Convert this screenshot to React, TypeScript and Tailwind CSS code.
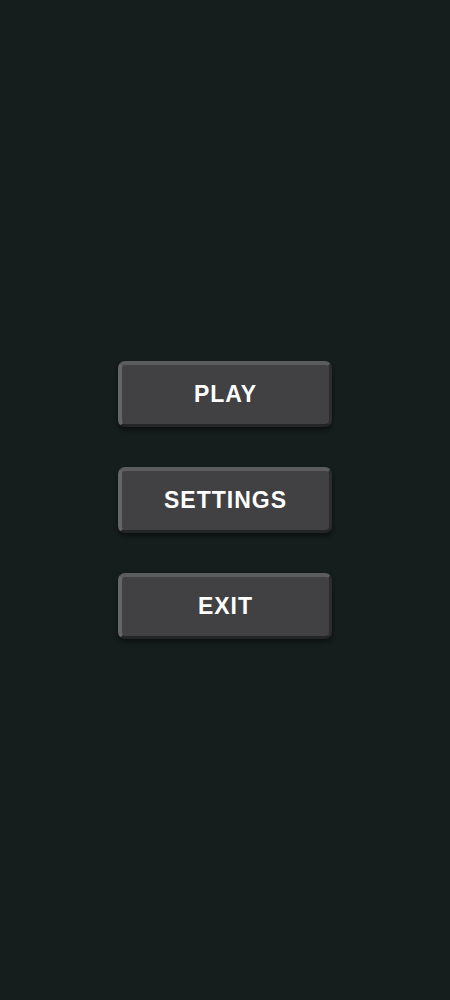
import React from "react";

function MenuButton({ label }: { label: string }) {
  return (
    <button className="w-[214px] h-[66px] rounded-[7px] bg-[#414042] border-t-[4px] border-l-[4px] border-r-[3px] border-b-[3px] border-t-[#5b5d5d] border-l-[#656767] border-r-[#2c2d2e] border-b-[#242526] shadow-[0_3px_4px_rgba(0,0,0,0.45)] flex items-center justify-center text-white font-bold text-[23px] tracking-[1px] font-['Liberation_Sans',Arial,sans-serif]">
      {label}
    </button>
  );
}

export default function App() {
  return (
    <div className="w-[450px] h-[1000px] bg-[#161d1d] flex flex-col items-center pt-[361px] gap-[40px]">
      <MenuButton label="PLAY" />
      <MenuButton label="SETTINGS" />
      <MenuButton label="EXIT" />
    </div>
  );
}
